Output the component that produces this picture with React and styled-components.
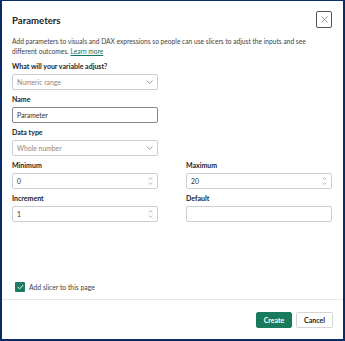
import React from "react";
import styled, { createGlobalStyle } from "styled-components";

const Global = createGlobalStyle`
  html, body { margin: 0; padding: 0; background: #fff; }
  body { font-family: Lato, "Noto Sans", sans-serif; }
  * { box-sizing: border-box; }
`;

const Frame = styled.div`
  width: 345px;
  height: 341px;
  border-style: solid;
  border-color: #0b2a68;
  border-width: 1px 2px 2px 2px;
  background: #fff;
  display: flex;
  flex-direction: column;
`;

const Body = styled.div`
  flex: 1;
  padding: 10px 11px 0 10px;
  display: flex;
  flex-direction: column;
`;

const Header = styled.div`
  display: flex;
  justify-content: space-between;
  align-items: flex-start;
`;

const Title = styled.h1`
  margin: 4px 0 0 0;
  font-size: 9.6px;
  font-weight: 700;
  color: #252423;
  line-height: 12px;
`;

const Close = styled.button`
  width: 16px;
  height: 17px;
  padding: 0;
  border: 1px solid #555;
  border-radius: 2px;
  background: #fff;
  display: flex;
  align-items: center;
  justify-content: center;
`;

const Desc = styled.p`
  margin: 8px 0 0 0;
  font-size: 6.65px;
  line-height: 10px;
  color: #444;
`;

const Link = styled.a`
  color: #117865;
  text-decoration: underline;
`;

const Label = styled.div`
  font-size: 7px;
  font-weight: 700;
  color: #252423;
  line-height: 9px;
  margin-top: ${(p) => p.$mt ?? 5}px;
  margin-bottom: 3px;
`;

const Field = styled.div`
  width: 146px;
  height: 16px;
  border: 1px solid ${(p) => (p.$dark ? "#8a8886" : "#cfcfcf")};
  border-radius: 2px;
  display: flex;
  align-items: center;
  justify-content: space-between;
  padding: 0 4px;
  font-size: 6.8px;
  color: ${(p) => (p.$placeholder ? "#8a8886" : "#323130")};
  background: #fff;
`;

const Grid = styled.div`
  display: grid;
  grid-template-columns: 146px 146px;
  column-gap: 28px;
`;

const Col = styled.div`
  display: flex;
  flex-direction: column;
`;

const Spin = styled.svg`
  width: 5px;
  height: 10px;
`;

const Spacer = styled.div`
  flex: 1;
`;

const CheckRow = styled.div`
  display: flex;
  align-items: center;
  gap: 4px;
  padding-left: 3px;
  margin-bottom: 7px;
  font-size: 6.8px;
  color: #444;
`;

const Box = styled.div`
  width: 10px;
  height: 10px;
  background: #1f7a62;
  border-radius: 1px;
  display: flex;
  align-items: center;
  justify-content: center;
`;

const Footer = styled.div`
  border-top: 1px solid #e8e8e8;
  height: 40px;
  display: flex;
  justify-content: flex-end;
  align-items: flex-start;
  gap: 4px;
  padding: 12px 10px 0 0;
`;

const Btn = styled.button`
  height: 16px;
  width: ${(p) => p.$w}px;
  font-family: inherit;
  font-size: 7px;
  font-weight: 700;
  border-radius: 2px;
  padding: 0;
  border: 1px solid ${(p) => (p.$primary ? "#1a7a5e" : "#d6d6d6")};
  background: ${(p) => (p.$primary ? "#1a7a5e" : "#fff")};
  color: ${(p) => (p.$primary ? "#fff" : "#252423")};
`;

const Chevron = () => (
  <svg width="7" height="4" viewBox="0 0 7 4">
    <path d="M0.5 0.5 L3.5 3.3 L6.5 0.5" fill="none" stroke="#8a8886" strokeWidth="0.8" />
  </svg>
);

const Spinner = () => (
  <Spin viewBox="0 0 5 10">
    <path d="M0.8 3.5 L2.5 1.5 L4.2 3.5 M0.8 6.5 L2.5 8.5 L4.2 6.5" fill="none" stroke="#a19f9d" strokeWidth="0.7" />
  </Spin>
);

export default function App() {
  return (
    <>
      <Global />
      <Frame>
        <Body>
          <Header>
            <Title>Parameters</Title>
            <Close aria-label="Close">
              <svg width="7" height="7" viewBox="0 0 7 7">
                <path d="M0.5 0.5 L6.5 6.5 M6.5 0.5 L0.5 6.5" stroke="#777" strokeWidth="0.8" />
              </svg>
            </Close>
          </Header>
          <Desc>
            Add parameters to visuals and DAX expressions so people can use slicers to adjust the inputs and see
            different outcomes. <Link>Learn more</Link>
          </Desc>
          <Label $mt={6}>What will your variable adjust?</Label>
          <Field $placeholder>
            Numeric range
            <Chevron />
          </Field>
          <Label>Name</Label>
          <Field $dark>Parameter</Field>
          <Label>Data type</Label>
          <Field $placeholder>
            Whole number
            <Chevron />
          </Field>
          <Grid>
            <Col>
              <Label>Minimum</Label>
              <Field>
                0
                <Spinner />
              </Field>
            </Col>
            <Col>
              <Label>Maximum</Label>
              <Field>
                20
                <Spinner />
              </Field>
            </Col>
            <Col>
              <Label>Increment</Label>
              <Field>
                1
                <Spinner />
              </Field>
            </Col>
            <Col>
              <Label>Default</Label>
              <Field />
            </Col>
          </Grid>
          <Spacer />
          <CheckRow>
            <Box>
              <svg width="7" height="6" viewBox="0 0 7 6">
                <path d="M0.8 3 L2.7 4.8 L6.2 1" fill="none" stroke="#fff" strokeWidth="0.9" />
              </svg>
            </Box>
            Add slicer to this page
          </CheckRow>
        </Body>
        <Footer>
          <Btn $primary $w={36}>Create</Btn>
          <Btn $w={37}>Cancel</Btn>
        </Footer>
      </Frame>
    </>
  );
}
